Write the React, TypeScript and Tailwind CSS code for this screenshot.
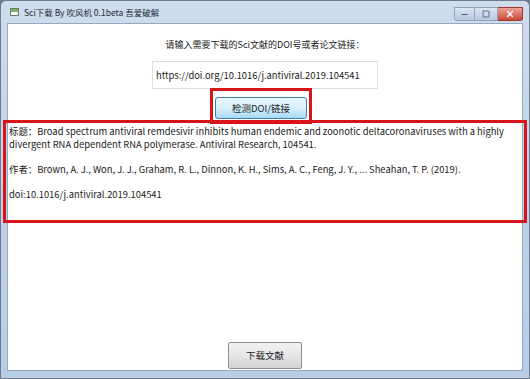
import { Minus, Square, X } from 'lucide-react'

const uiFont = { fontFamily: '"Noto Sans CJK SC", "Noto Sans", sans-serif' }

function CaptionButtons() {
  return (
    <div className="flex items-start self-start pt-[6px] pr-[6px]">
      <div className="flex h-[14px] w-[21px] items-center justify-center rounded-bl-[3px] border border-[#8da1bb] bg-gradient-to-b from-[#dde7f3] to-[#b7c9df]">
        <Minus size={9} strokeWidth={3} className="text-[#4a5a70]" />
      </div>
      <div className="flex h-[14px] w-[23px] items-center justify-center border border-l-0 border-[#8da1bb] bg-gradient-to-b from-[#dde7f3] to-[#b7c9df]">
        <Square size={8} strokeWidth={2.5} className="text-[#4a5a70]" />
      </div>
      <div className="flex h-[14px] w-[25px] items-center justify-center rounded-br-[3px] border border-l-0 border-[#9b3a2e] bg-gradient-to-b from-[#e8a493] to-[#c8473a]">
        <X size={10} strokeWidth={3} className="text-white" />
      </div>
    </div>
  )
}

export default function App() {
  return (
    <div className="h-[379px] w-[530px] overflow-hidden bg-[#6d7c8e] p-px" style={uiFont}>
      <div className="flex h-full flex-col rounded-t-[5px] bg-gradient-to-b from-[#cfdcec] via-[#bfd2e8] to-[#b9cde5]">
        <div className="flex h-[22px] shrink-0 items-center pl-[9px]">
          <div className="mr-[5px] flex h-[8px] w-[9px] flex-col border border-[#6a7a6a] bg-white">
            <div className="h-[3px] bg-[#7fb06a]" />
          </div>
          <span className="flex-1 text-[8.5px] leading-none text-[#1e2a3a]">Sci下载 By 吹风机 0.1beta 吾爱破解</span>
          <CaptionButtons />
        </div>
        <div className="mx-[6px] mb-[7px] flex flex-1 flex-col border border-[#95a9c2] bg-white text-[#1a1a1a]">
          <div className="mt-[14px] text-center text-[9px] leading-[14px]">请输入需要下载的Sci文献的DOI号或者论文链接：</div>
          <div className="mt-[9px] flex justify-center">
            <div className="flex h-[28px] w-[226px] items-center border border-[#dbdfe6] bg-white pl-[3px] text-[9.4px]">
              https://doi.org/10.1016/j.antiviral.2019.104541
            </div>
          </div>
          <div className="mt-[-1px] flex justify-center">
            <div className="ml-[-8px] border-[3px] border-[#d7141a] p-[2px]">
              <button className="h-[22px] w-[92px] rounded-[3px] border border-[#3c7fb1] bg-gradient-to-b from-[#eaf6fd] via-[#d9f0fc] to-[#a7d9f5] text-[9.5px] text-[#1a1a1a]">
                检测DOI/链接
              </button>
            </div>
          </div>
          <div className="mx-[-5px] mt-[-4px] h-[103px] shrink-0 border-[3px] border-[#d7141a] pl-[3px] pt-[2px] text-[9.4px] leading-[13px]">
            <p>
              标题：Broad spectrum antiviral remdesivir inhibits human endemic and zoonotic deltacoronaviruses with a highly divergent RNA dependent RNA polymerase. Antiviral Research, 104541.
            </p>
            <p className="mt-[12px]">
              作者：Brown, A. J., Won, J. J., Graham, R. L., Dinnon, K. H., Sims, A. C., Feng, J. Y., ... Sheahan, T. P. (2019).
            </p>
            <p className="mt-[12px]">doi:10.1016/j.antiviral.2019.104541</p>
          </div>
          <div className="flex flex-1 items-end justify-center pb-[1px]">
            <button className="h-[27px] w-[74px] rounded-[2px] border border-[#8e8f8f] bg-gradient-to-b from-[#f2f2f2] via-[#e6e6e6] to-[#d2d2d2] text-[9.5px] text-[#1a1a1a]">
              下载文献
            </button>
          </div>
        </div>
      </div>
    </div>
  )
}
